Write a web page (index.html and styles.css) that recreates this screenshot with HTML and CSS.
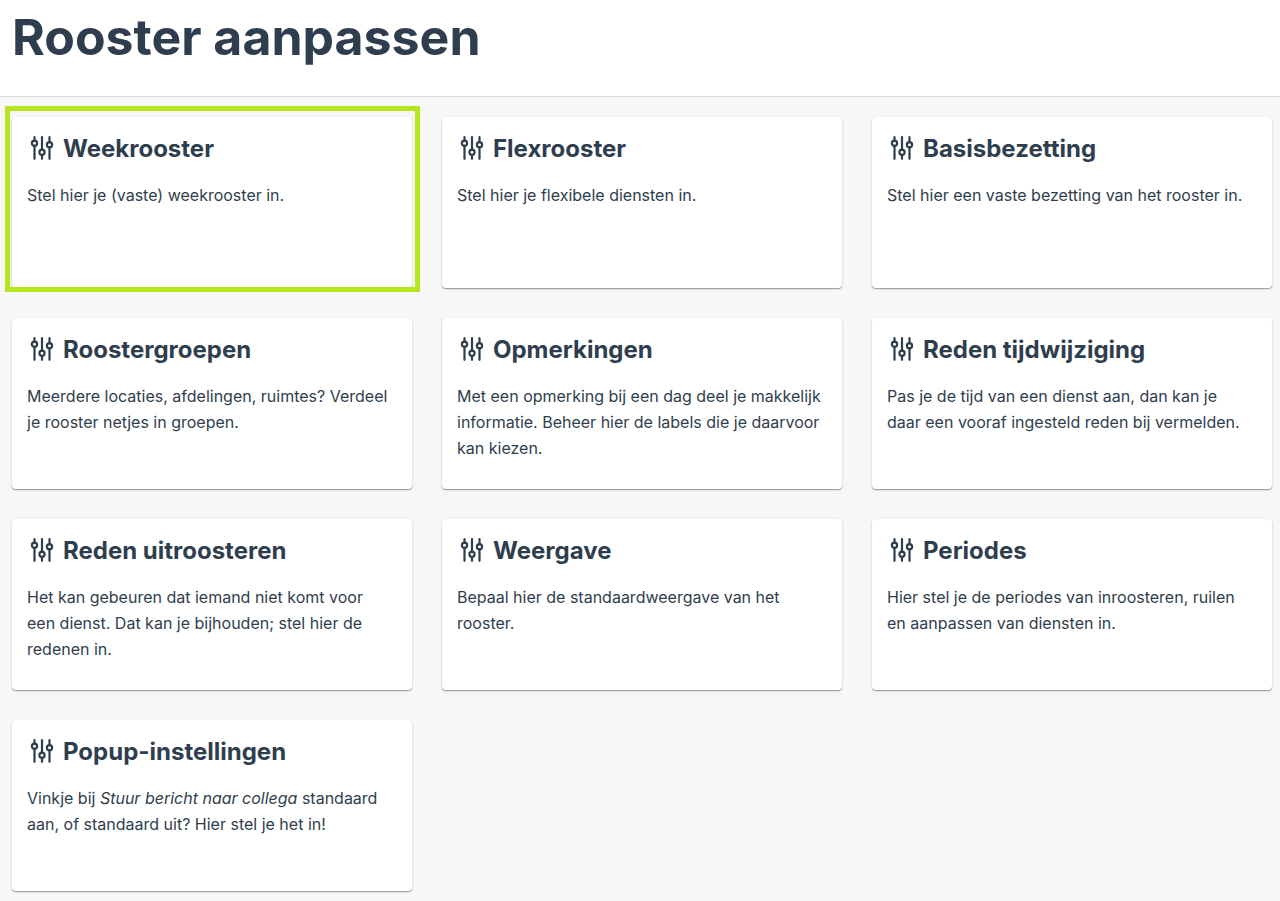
FILE: index.html
```html
<!doctype html>
<html lang="nl">
    <head>
        <meta charset="utf-8">
        <meta name="viewport" content="width=device-width, initial-scale=1">
        <title>Rooster aanpassen</title>
        <link rel="stylesheet" href="styles.css">
    </head>
    <body>
        <svg class="sprite" aria-hidden="true">
            <symbol id="sliders" viewBox="0 0 24 26">
                <path d="M4.5 1.2v3.6M4.5 9.8V22.8M12 1.2v12.6M12 18.8V22.8M19.5 1.2v5M19.5 11.2V22.8"/>
                <circle cx="4.5" cy="7.3" r="2.6"/>
                <circle cx="12" cy="16.3" r="2.6"/>
                <circle cx="19.5" cy="8.7" r="2.6"/>
            </symbol>
        </svg>
        <header>
            <h1>Rooster aanpassen</h1>
        </header>
        <main>
            <a class="card active" href="#weekrooster">
                <h2><svg class="icon"><use href="#sliders"/></svg>Weekrooster</h2>
                <p>Stel hier je (vaste) weekrooster in.</p>
            </a>
            <a class="card" href="#flexrooster">
                <h2><svg class="icon"><use href="#sliders"/></svg>Flexrooster</h2>
                <p>Stel hier je flexibele diensten in.</p>
            </a>
            <a class="card" href="#basisbezetting">
                <h2><svg class="icon"><use href="#sliders"/></svg>Basisbezetting</h2>
                <p>Stel hier een vaste bezetting van het rooster in.</p>
            </a>
            <a class="card" href="#roostergroepen">
                <h2><svg class="icon"><use href="#sliders"/></svg>Roostergroepen</h2>
                <p>Meerdere locaties, afdelingen, ruimtes? Verdeel je rooster netjes in groepen.</p>
            </a>
            <a class="card" href="#opmerkingen">
                <h2><svg class="icon"><use href="#sliders"/></svg>Opmerkingen</h2>
                <p>Met een opmerking bij een dag deel je makkelijk informatie. Beheer hier de labels die je daarvoor kan kiezen.</p>
            </a>
            <a class="card" href="#tijdwijziging">
                <h2><svg class="icon"><use href="#sliders"/></svg>Reden tijdwijziging</h2>
                <p>Pas je de tijd van een dienst aan, dan kan je daar een vooraf ingesteld reden bij vermelden.</p>
            </a>
            <a class="card" href="#uitroosteren">
                <h2><svg class="icon"><use href="#sliders"/></svg>Reden uitroosteren</h2>
                <p>Het kan gebeuren dat iemand niet komt voor een dienst. Dat kan je bijhouden; stel hier de redenen in.</p>
            </a>
            <a class="card" href="#weergave">
                <h2><svg class="icon"><use href="#sliders"/></svg>Weergave</h2>
                <p>Bepaal hier de standaardweergave van het rooster.</p>
            </a>
            <a class="card" href="#periodes">
                <h2><svg class="icon"><use href="#sliders"/></svg>Periodes</h2>
                <p>Hier stel je de periodes van inroosteren, ruilen en aanpassen van diensten in.</p>
            </a>
            <a class="card" href="#popup">
                <h2><svg class="icon"><use href="#sliders"/></svg>Popup-instellingen</h2>
                <p>Vinkje bij <em>Stuur bericht naar collega</em> standaard aan, of standaard uit? Hier stel je het in!</p>
            </a>
        </main>
    </body>
</html>
```
FILE: styles.css
```css
* {
    box-sizing: border-box;
}

body {
    margin: 0;
    font-family: Inter, "Liberation Sans", sans-serif;
    font-size: 16px;
    line-height: 26px;
    color: #2f3e4e;
    background-color: #f7f7f7;
}

.sprite {
    display: none;
}

header {
    padding: 7px 12px 29px;
    border-bottom: 1px solid #d8d8d8;
    background-color: #fff;
}

h1 {
    margin: 0;
    font-size: 50px;
    line-height: 60px;
    font-weight: 700;
}

main {
    display: grid;
    grid-template-columns: repeat(3, 1fr);
    gap: 30px;
    padding: 20px 8px 10px 12px;
}

.card {
    position: relative;
    min-height: 171px;
    padding: 16px 19px 16px 15px;
    border-radius: 4px;
    background-color: #fff;
    box-shadow: 0 1px 1px rgba(0, 0, 0, .32), 0 1px 3px rgba(0, 0, 0, .12);
    color: inherit;
    text-decoration: none;
}

/* marker around the selected card */
.active::after {
    content: "";
    position: absolute;
    inset: -11px -8px -4px -7px;
    border: 5px solid #b5e61d;
}

h2 {
    display: flex;
    align-items: center;
    gap: 9px;
    margin: 0 0 17px;
    padding-left: 3px;
    font-size: 24px;
    line-height: 32px;
    font-weight: 700;
}

.icon {
    width: 24px;
    height: 26px;
    fill: none;
    stroke: #2f3e4e;
    stroke-width: 2.2;
    stroke-linecap: round;
}

p {
    margin: 0;
}
```
